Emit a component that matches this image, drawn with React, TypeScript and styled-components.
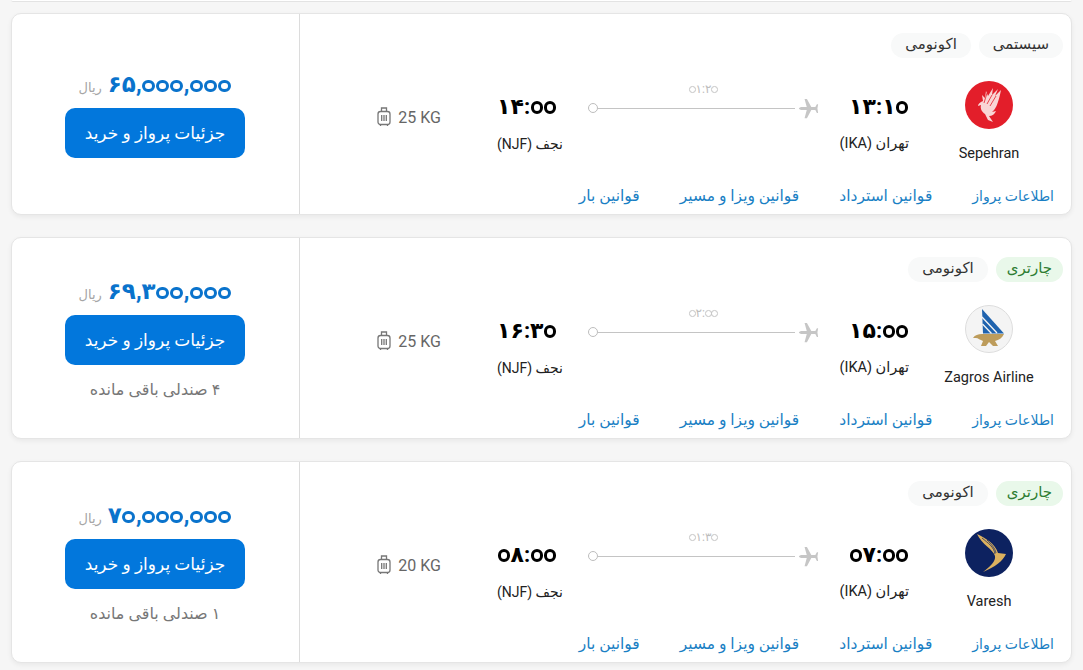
import React from "react";
import styled, { createGlobalStyle } from "styled-components";

const Global = createGlobalStyle`
  html, body { margin: 0; padding: 0; background: #f6f6f6; }
  body { font-family: Roboto, "DejaVu Sans", sans-serif; overflow: hidden; }
  *, *::before { box-sizing: border-box; }
`;
const Page = styled.div`
  width: 1083px; height: 670px; padding: 0 11px; display: flex; flex-direction: column; overflow: hidden;
`;
const Stub = styled.div`
  height: 2px; flex: none; margin-bottom: 11px; background: #fff; border-bottom: 1px solid #e3e3e3; border-radius: 0 0 10px 10px;
`;
const Card = styled.section`
  direction: rtl; flex: none; height: 202px; margin-bottom: 22px; background: #fff; border: 1px solid #e5e5e5; border-radius: 10px;
  box-shadow: 0 2px 5px rgba(0,0,0,.06); display: flex;
`;
const Main = styled.div`
  flex: 1; display: flex; flex-direction: column; padding-top: 19px; border-left: 1px solid #dcdcdc;
`;
const Tags = styled.div`
  display: flex; gap: 8px; height: 26px; padding-right: 8px;
`;
const Tag = styled.span<{ $green?: boolean }>`
  height: 25px; padding: 0 ${p => (p.$green ? 11 : 14)}px; border-radius: 13px; font-size: 15px; line-height: 23px;
  background: ${p => (p.$green ? "#e9f8ea" : "#f8f9f9")}; color: ${p => (p.$green ? "#2e7d32" : "#333")};
`;
const Body = styled.div`
  display: flex; margin-top: 22px; height: 90px; padding-right: 17px;
`;
const Airline = styled.div`
  width: 130px; margin-left: 15px; display: flex; flex-direction: column; align-items: center; flex: none;
`;
const AirlineName = styled.div`
  direction: ltr; margin-top: 16px; font-size: 14.500px; line-height: 18px; color: #222; white-space: nowrap;
`;
const Endpoint = styled.div<{ $arrival?: boolean }>`
  width: ${p => (p.$arrival ? 66 : 70)}px; flex: none; padding-top: 12px; text-align: ${p => (p.$arrival ? "left" : "right")};
`;
const Time = styled.div`
  font-size: 22px; font-weight: 700; line-height: 28px; color: #000; white-space: nowrap;
`;
const City = styled.div<{ $small?: boolean }>`
  margin-top: 13px; font-size: ${p => (p.$small ? 14 : 14.5)}px; line-height: 20px; color: #222; white-space: nowrap;
`;
const Route = styled.div`
  width: 231px; flex: none; margin: 0 20px 0 25px;
`;
const Duration = styled.div`
  text-align: center; font-size: 12px; line-height: 16px; color: #bdbdbd; height: 17px;
`;
const Line = styled.div`
  display: flex; align-items: center; height: 20px;
`;
const Rule = styled.div`
  flex: 1; height: 1px; background: #c4c4c4; margin-right: 3px;
`;
const Dot = styled.span`
  width: 10px; height: 10px; flex: none; border: 1px solid #bdbdbd; border-radius: 50%;
`;
const Bag = styled.div`
  direction: ltr; display: flex; align-items: center; gap: 7px; margin-right: 56px; margin-top: 25px; height: 22px;
  font-size: 16px; color: #666;
`;
const Links = styled.div`
  display: flex; gap: 40px; margin-top: 15px; padding-right: 17px;
`;
const Link = styled.a`
  font-size: 15.500px; line-height: 20px; color: #1a7fc4; white-space: nowrap;
  &:first-child { font-size: 14px; }
`;
const Price = styled.div`
  width: 287px; flex: none; display: flex; flex-direction: column; align-items: center; justify-content: center; padding: 3px 1px 0 0;
`;
const Amount = styled.div`
  display: flex; align-items: baseline; gap: 6px; height: 24px; line-height: 24px; margin-bottom: 11px;
`;
const Value = styled.span`
  font-size: 23px; font-weight: 700; color: #0a73cc; white-space: nowrap;
`;
const Unit = styled.span`
  font-size: 13px; color: #a5a5a5;
`;
const Buy = styled.button`
  width: 180px; height: 50px; flex: none; border: 0; border-radius: 10px; background: #0277dc; color: #fff; font-size: 17px; font-family: inherit;
`;
const Seats = styled.div`
  margin-top: 15px; height: 19px; font-size: 16px; line-height: 20px; color: #777;
`;
const Logo = styled.svg`
  width: 48px; height: 48px; flex: none; display: block;
`;
const DigitRun = styled.span`
  direction: ltr; unicode-bidi: isolate;
`;
const Zero = styled.span<{ $ring: string; $stroke: number }>`
  position: relative; color: transparent;
  &::before {
    content: ""; position: absolute; left: 50%; bottom: .24em; width: .56em; height: .56em; margin-left: -.28em;
    border: ${p => p.$stroke}em solid ${p => p.$ring}; border-radius: 50%;
  }
`;

const Digits = ({ text, ring, stroke = 0.17 }: { text: string; ring: string; stroke?: number }) => (
  <DigitRun>
    {Array.from(text).map((c, i) => (c === "۰" ? <Zero key={i} $ring={ring} $stroke={stroke}>{c}</Zero> : <React.Fragment key={i}>{c}</React.Fragment>))}
  </DigitRun>
);

const SepehranLogo = () => (
  <Logo viewBox="0 0 48 48">
    <circle cx="24" cy="24" r="24" fill="#e31e2a" />
    <path d="M36 9l-6 6 3-7-6 6 1-7-5 8-2-5-1 7-3-3 1 6c-3 1-5 3-5 5l3-1c-1 4 1 7 4 9l3 6 5 2-4-6c3 0 6-2 7-5l-4 1c3-2 6-7 9-22z" fill="#f9d5d5" />
    <path d="M27 14l-5 9M31 15l-6 10M22 12l-3 10" stroke="#e31e2a" strokeWidth=".8" />
  </Logo>
);
const ZagrosLogo = () => (
  <Logo viewBox="0 0 48 48">
    <circle cx="24" cy="24" r="23.500" fill="#f4f4f4" stroke="#ddd" />
    <path d="M17 4l22 24.500H18z" fill="#1f63ae" />
    <path d="M17 12l15 16M17.500 19l9 9.500" stroke="#f4f4f4" strokeWidth="1.300" />
    <path d="M8 33c2-3 5-4 9-4h22c-2 4-5 6-9 7l3 5h-5l-4-4-3 4h-5l2-5c-3-1-5-3-7-3z" fill="#bd9c5b" />
  </Logo>
);
const VareshLogo = () => (
  <Logo viewBox="0 0 48 48">
    <circle cx="24" cy="24" r="24" fill="#0d2260" />
    <path d="M12 5c8 4 18 9 21 19l8 1c-3 7-11 13-23 18 7-5 13-11 12-16C28 20 17 16 12 5z" fill="#dcb15f" />
    <path d="M17 9c6 5 12 9 13 16M22 11c4 4 8 8 9 13" stroke="#0d2260" strokeWidth=".7" fill="none" />
  </Logo>
);
const PlaneIcon = () => (
  <svg width="21" height="21" viewBox="0 0 24 24" style={{ flex: "none" }}>
    <path d="M1 12c0-1 2-1.800 4-1.800h5L7.500 1h2.700l5 9.200h4.600L21.600 7h1.400l-.8 5 .8 5h-1.400l-1.800-3.200h-4.600l-5 9.200H7.500L10 13.800H5c-2 0-4-.8-4-1.800z" fill="#c6c6c6" />
  </svg>
);
const BagIcon = () => (
  <svg width="14" height="20" viewBox="0 0 14 20" fill="none" stroke="#777" strokeWidth="1.300">
    <rect x="1" y="4.500" width="12" height="13" rx="2.500" />
    <path d="M4.500 4.500V1h5v3.500M4.700 8v6M7 8v6M9.300 8v6M3.500 18v1M10.500 18v1" />
  </svg>
);

type Flight = {
  tag: string; green?: boolean; logo: React.ReactNode; name: string; dep: string; dur: string; arr: string; kg: string; price: string; seats?: string;
};
const flights: Flight[] = [
  { tag: "سیستمی", logo: <SepehranLogo />, name: "Sepehran", dep: "۱۳:۱۰", dur: "۰۱:۲۰", arr: "۱۴:۰۰", kg: "25 KG", price: "۶۵,۰۰۰,۰۰۰" },
  { tag: "چارتری", green: true, logo: <ZagrosLogo />, name: "Zagros Airline", dep: "۱۵:۰۰", dur: "۰۲:۰۰", arr: "۱۶:۳۰", kg: "25 KG", price: "۶۹,۳۰۰,۰۰۰", seats: "۴ صندلی باقی مانده" },
  { tag: "چارتری", green: true, logo: <VareshLogo />, name: "Varesh", dep: "۰۷:۰۰", dur: "۰۱:۳۰", arr: "۰۸:۰۰", kg: "20 KG", price: "۷۰,۰۰۰,۰۰۰", seats: "۱ صندلی باقی مانده" },
];

export default function App() {
  return (
    <Page>
      <Global />
      <Stub />
      {flights.map(f => (
        <Card key={f.name}>
          <Main>
            <Tags>
              <Tag $green={f.green}>{f.tag}</Tag>
              <Tag>اکونومی</Tag>
            </Tags>
            <Body>
              <Airline>{f.logo}<AirlineName>{f.name}</AirlineName></Airline>
              <Endpoint>
                <Time><Digits text={f.dep} ring="#000" /></Time>
                <City>تهران (IKA)</City>
              </Endpoint>
              <Route>
                <Duration><Digits text={f.dur} ring="#c4c4c4" stroke={0.12} /></Duration>
                <Line><PlaneIcon /><Rule /><Dot /></Line>
              </Route>
              <Endpoint $arrival>
                <Time><Digits text={f.arr} ring="#000" /></Time>
                <City $small>نجف (NJF)</City>
              </Endpoint>
              <Bag><BagIcon />{f.kg}</Bag>
            </Body>
            <Links>
              <Link>اطلاعات پرواز</Link>
              <Link>قوانین استرداد</Link>
              <Link>قوانین ویزا و مسیر</Link>
              <Link>قوانین بار</Link>
            </Links>
          </Main>
          <Price>
            <Amount><Value><Digits text={f.price} ring="#0a73cc" /></Value><Unit>ریال</Unit></Amount>
            <Buy>جزئیات پرواز و خرید</Buy>
            {f.seats && <Seats>{f.seats}</Seats>}
          </Price>
        </Card>
      ))}
    </Page>
  );
}
